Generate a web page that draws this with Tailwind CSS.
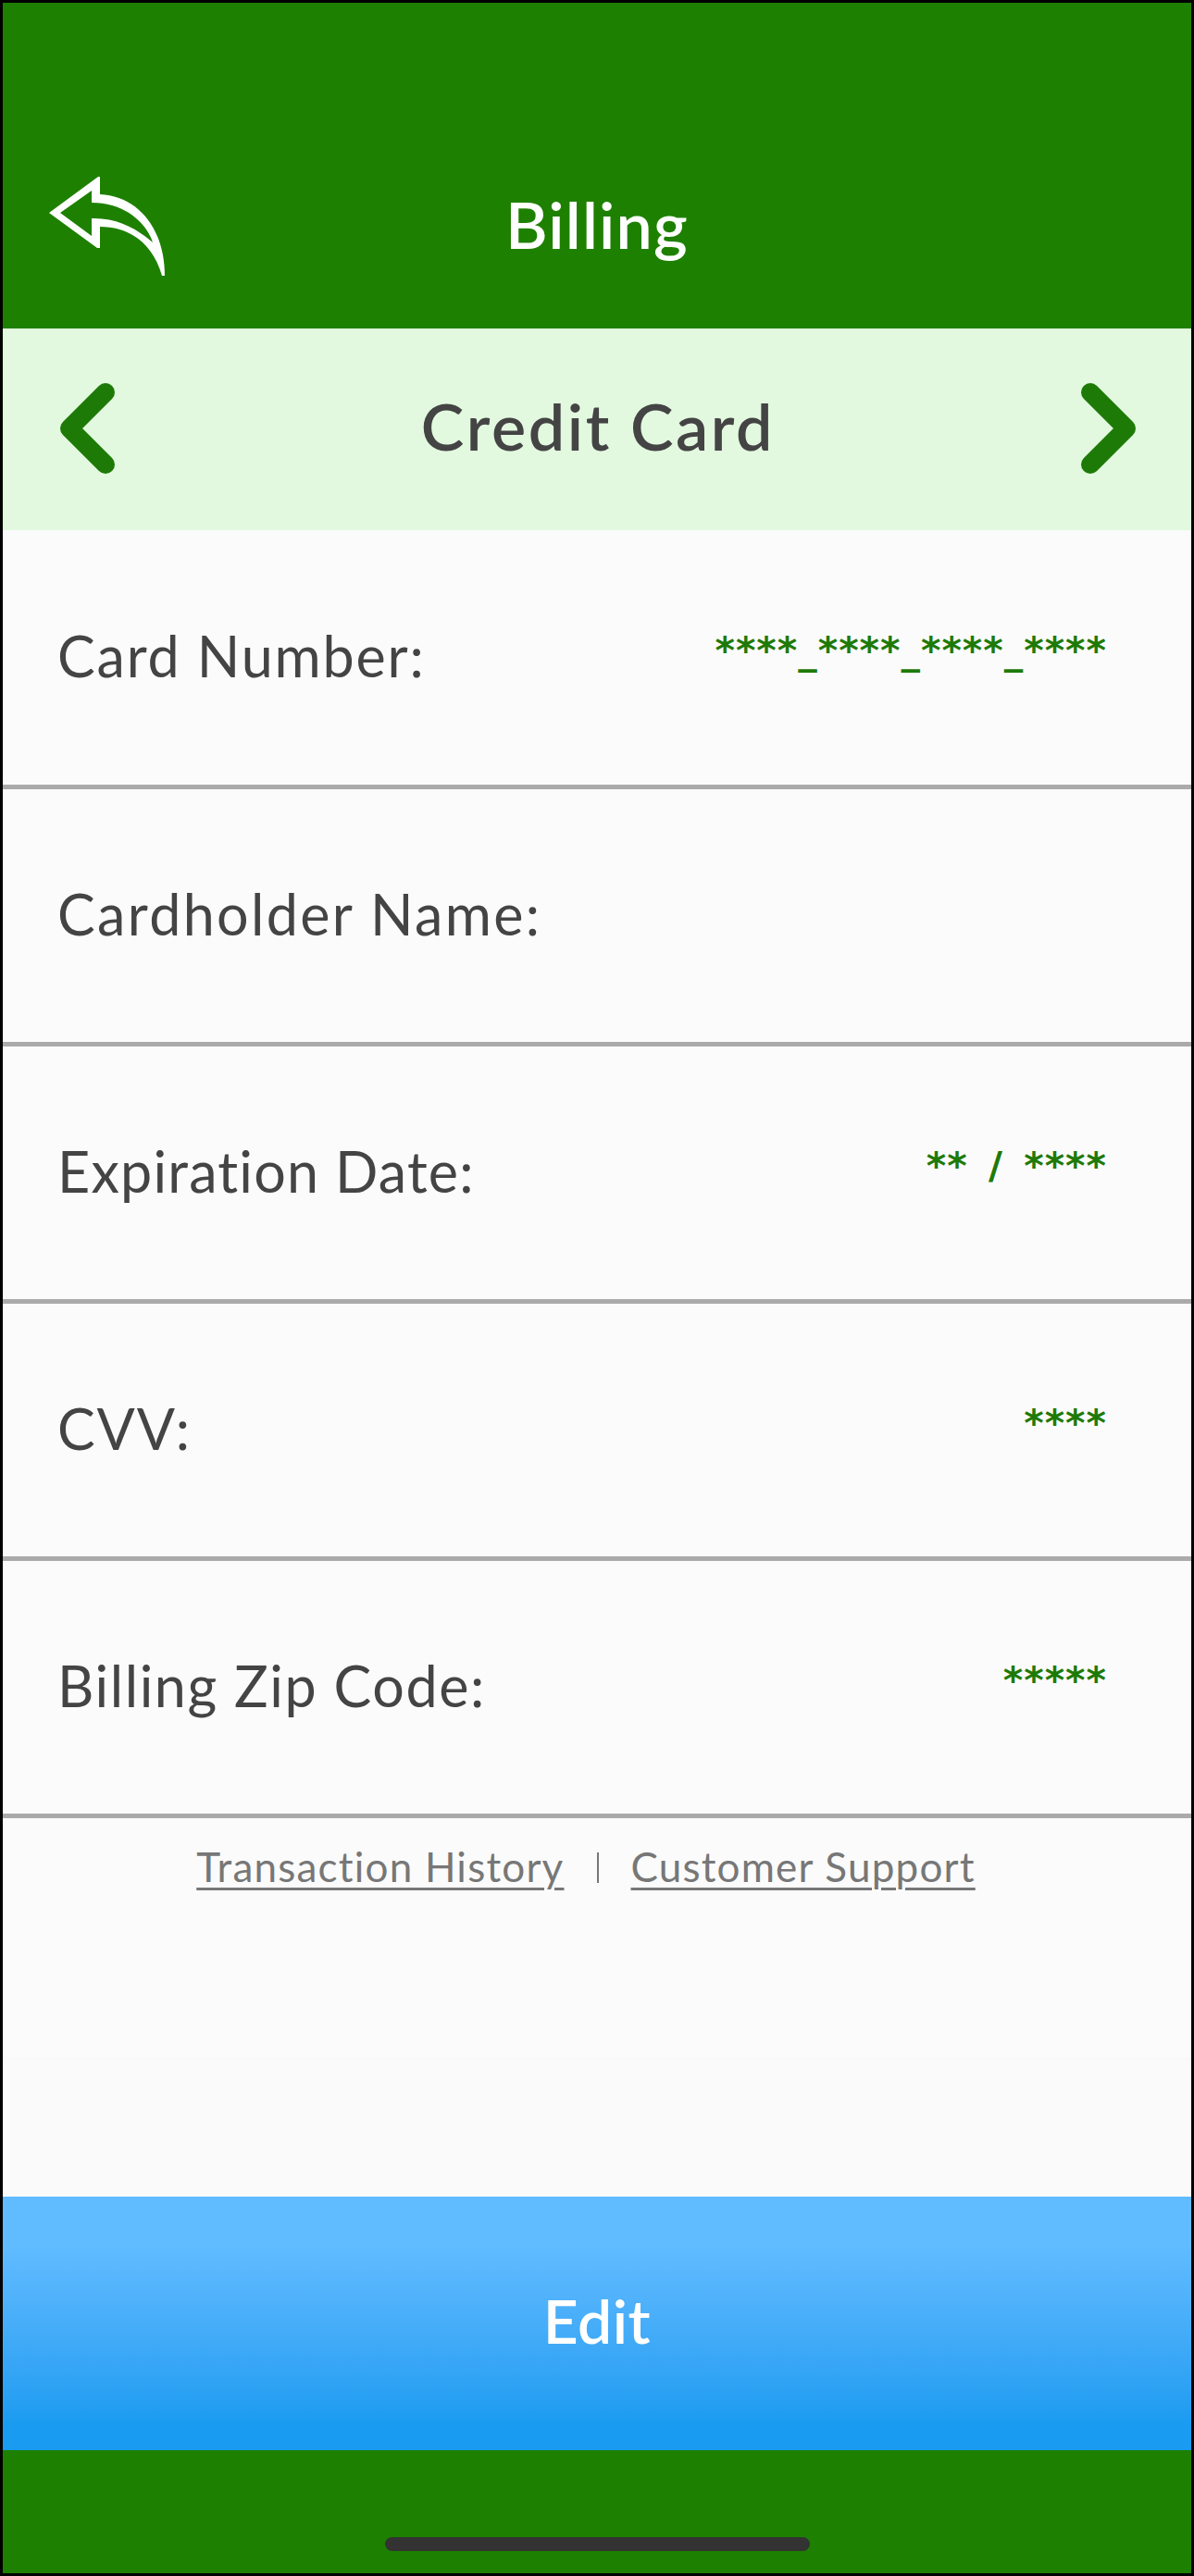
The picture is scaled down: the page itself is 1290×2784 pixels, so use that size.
<!DOCTYPE html>
<html lang="en">
<head>
  <meta charset="utf-8">
  <title>Billing</title>
  <script src="https://cdn.jsdelivr.net/npm/@tailwindcss/browser@4"></script>
</head>
<body class="bg-black">
  <div class="w-[1290px] h-[2784px] border-[3px] border-black flex flex-col bg-[#fbfbfb] font-['Lato',sans-serif]">

    <header class="h-[352px] shrink-0 bg-[#1e8000] flex items-end justify-between pb-[54px] px-[44px]">
      <svg class="w-[140px] h-[116px] mb-[-1px]" viewBox="47 186 140 116" fill="none">
        <path fill="#fff" fill-rule="evenodd" d="M53 230 L106 191 L108 191 L108 210 C150 212 178 248 178 298 L175 298 C165 263 140 245 108 245 L108 268 L105 268 Z M65 230 L99 255 L99 236 C126 235 148 247 165 262 C158 240 134 219 99 219 L99 206 Z"/>
      </svg>
      <h1 class="text-[70px] leading-none font-semibold tracking-[1.2px] text-white mb-[24px]">Billing</h1>
      <div class="w-[140px]"></div>
    </header>

    <div class="h-[218px] shrink-0 bg-[#e2f9df] flex items-center justify-between pl-[59px] pr-[57px]">
      <svg class="w-[66px] h-[104px]" viewBox="0 0 66 104" fill="none">
        <path d="M52 12 L13 51 L52 90" stroke="#1e7a07" stroke-width="20" stroke-linecap="round" stroke-linejoin="round"/>
      </svg>
      <h2 class="text-[70px] leading-none font-semibold tracking-[2.6px] text-[#444] pb-[8px]">Credit Card</h2>
      <svg class="w-[66px] h-[104px]" viewBox="0 0 66 104" fill="none">
        <path d="M14 12 L53 51 L14 90" stroke="#1e7a07" stroke-width="20" stroke-linecap="round" stroke-linejoin="round"/>
      </svg>
    </div>

    <main class="flex flex-col">
      <div class="h-[280px] border-b-[5px] border-[#aaa] flex items-center justify-between pl-[59px] pr-[91px] pb-[3px]">
        <span class="text-[61px] tracking-[1.8px] text-[#444]">Card Number:</span>
        <span class="font-['DejaVu_Sans',sans-serif] font-bold text-[41px] tracking-[1px] text-[#1e7a07] mb-[10px]">****_****_****_****</span>
      </div>
      <div class="h-[278px] border-b-[5px] border-[#aaa] flex items-center justify-between pl-[59px] pr-[91px] pb-[3px]">
        <span class="text-[61px] tracking-[2.35px] text-[#444]">Cardholder Name:</span>
      </div>
      <div class="h-[278px] border-b-[5px] border-[#aaa] flex items-center justify-between pl-[59px] pr-[91px] pb-[3px]">
        <span class="text-[61px] tracking-[1.2px] text-[#444]">Expiration Date:</span>
        <span class="font-['DejaVu_Sans',sans-serif] font-bold text-[41px] tracking-[1px] [word-spacing:7px] text-[#1e7a07] mb-[10px] whitespace-pre">** / ****</span>
      </div>
      <div class="h-[278px] border-b-[5px] border-[#aaa] flex items-center justify-between pl-[59px] pr-[91px] pb-[3px]">
        <span class="text-[61px] tracking-[1.8px] text-[#444]">CVV:</span>
        <span class="font-['DejaVu_Sans',sans-serif] font-bold text-[41px] tracking-[1px] text-[#1e7a07] mb-[10px]">****</span>
      </div>
      <div class="h-[278px] border-b-[5px] border-[#aaa] flex items-center justify-between pl-[59px] pr-[91px] pb-[3px]">
        <span class="text-[61px] tracking-[1.6px] text-[#444]">Billing Zip Code:</span>
        <span class="font-['DejaVu_Sans',sans-serif] font-bold text-[41px] tracking-[1px] text-[#1e7a07] mb-[10px]">*****</span>
      </div>
    </main>

    <div class="h-[261px] shrink-0 border-b-2 border-[#f8f8f8] pt-[25px] pr-[24px] flex justify-center items-start gap-[35px] text-[44px] leading-[54px] tracking-[1.2px] text-[#777]">
      <a href="#" class="underline underline-offset-[6px] decoration-[3px]">Transaction History</a>
      <div class="w-[2px] h-[33px] mt-[12px] bg-[#777]"></div>
      <a href="#" class="underline underline-offset-[6px] decoration-[3px]">Customer Support</a>
    </div>

    <div class="flex-1 bg-[#fafafa]"></div>

    <button class="h-[274px] shrink-0 bg-gradient-to-b from-[#60bbff] from-[20%] to-[#189bf0] to-[90%] text-white text-[66px] font-semibold tracking-[0.5px] flex items-center justify-center pb-[8px]">Edit</button>

    <footer class="h-[133px] shrink-0 bg-[#1e8000] flex justify-center pt-[94px]">
      <div class="w-[459px] h-[15px] rounded-full bg-[#333]"></div>
    </footer>
  </div>
</body>
</html>
